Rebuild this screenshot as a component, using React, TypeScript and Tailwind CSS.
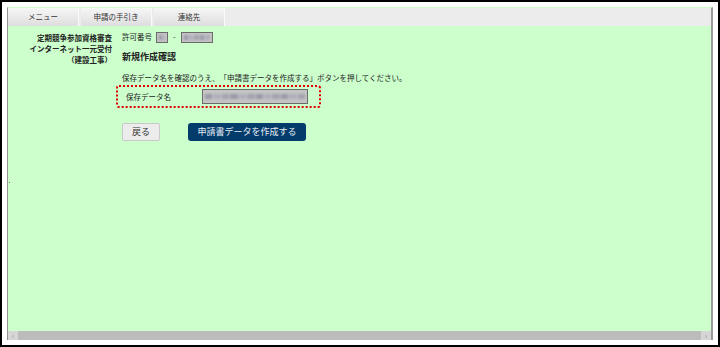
import React from "react";

const jp = { fontFamily: '"Noto Sans CJK JP", "Noto Sans", sans-serif' };

function Blur({ className, count }: { className: string; count: number }) {
  return (
    <div className={`border border-[#6b6b6b] bg-[#c4c4c4] overflow-hidden flex items-center gap-[1px] px-[2px] ${className}`}>
      <div className="flex items-center gap-[1px] blur-[1px] w-full">
        {Array.from({ length: count }).map((_, i) => (
          <span
            key={i}
            className="h-[5px] flex-1"
            style={{ background: i % 3 === 0 ? "#9a9aaa" : i % 3 === 1 ? "#b0b0bc" : "#a4a4b0" }}
          />
        ))}
      </div>
    </div>
  );
}

export default function App() {
  return (
    <div className="w-[720px] h-[347px] border-2 border-black bg-white p-[5px] text-[#222] [text-spacing-trim:space-all]" style={jp}>
      <div className="flex flex-col h-full border-t border-t-[#ccffcc] border-l border-l-[#8c948c] border-r-2 border-r-[#9a9a9a]">
        <div className="h-[18px] flex bg-[#ececec] shrink-0">
          {["メニュー", "申請の手引き", "連絡先"].map((t) => (
            <div
              key={t}
              className="w-[71px] mr-[2px] flex items-center justify-center text-[7.5px] text-[#333] bg-gradient-to-b from-[#f6f6f6] to-[#dedede] border-r border-r-[#fafafa]"
            >
              {t}
            </div>
          ))}
          <div className="flex-1" />
        </div>
        <div className="flex-1 bg-[#ccffcc] flex relative">
          <div className="w-[104px] pt-[6px] text-right font-bold text-[7.5px] leading-[11px]">
            <div>定期競争参加資格審査</div>
            <div>インターネット一元受付</div>
            <div>（建設工事）</div>
          </div>
          <div className="ml-[10px] pt-[5px] flex flex-col">
            <div className="flex items-center text-[7.5px] h-[12px]">
              <span>許可番号</span>
              <Blur className="w-[12px] h-[11px] ml-[4px]" count={2} />
              <span className="mx-[5px]">-</span>
              <Blur className="w-[32px] h-[11px]" count={5} />
            </div>
            <div className="font-bold text-[9px] mt-[8px] leading-[12px]">新規作成確認</div>
            <div className="text-[7.5px] mt-[10px] leading-[10px]">
              保存データ名を確認のうえ、「申請書データを作成する」ボタンを押してください。
            </div>
            <div className="mt-[2px] -ml-[6px] w-[205px] h-[23px] border-2 border-dotted border-[#e00000] rounded-[3px] flex items-center">
              <span className="text-[7.5px] ml-[8px] w-[76px]">保存データ名</span>
              <Blur className="w-[106px] h-[15px]" count={12} />
            </div>
            <div className="flex mt-[15px]">
              <div className="w-[38px] h-[18px] bg-[#ececec] border border-[#c8c8c8] rounded-[2px] flex items-center justify-center text-[9px] text-[#333]">
                戻る
              </div>
              <div className="ml-[28px] w-[118px] h-[18px] bg-[#033c6b] rounded-[3px] flex items-center justify-center text-[9px] text-[#e8eef4]">
                申請書データを作成する
              </div>
            </div>
          </div>
          <div className="absolute left-[1px] top-[156px] w-[1px] h-[1px] bg-[#777]" />
        </div>
        <div className="h-[9px] flex bg-[#bcbcbc] shrink-0">
          <div className="w-[10px] bg-[#d6d6d6] flex items-center justify-center text-[7px] leading-none text-[#888]">‹</div>
          <div className="flex-1" />
          <div className="w-[10px] bg-[#d6d6d6] flex items-center justify-center text-[7px] leading-none text-[#888]">›</div>
        </div>
      </div>
    </div>
  );
}
